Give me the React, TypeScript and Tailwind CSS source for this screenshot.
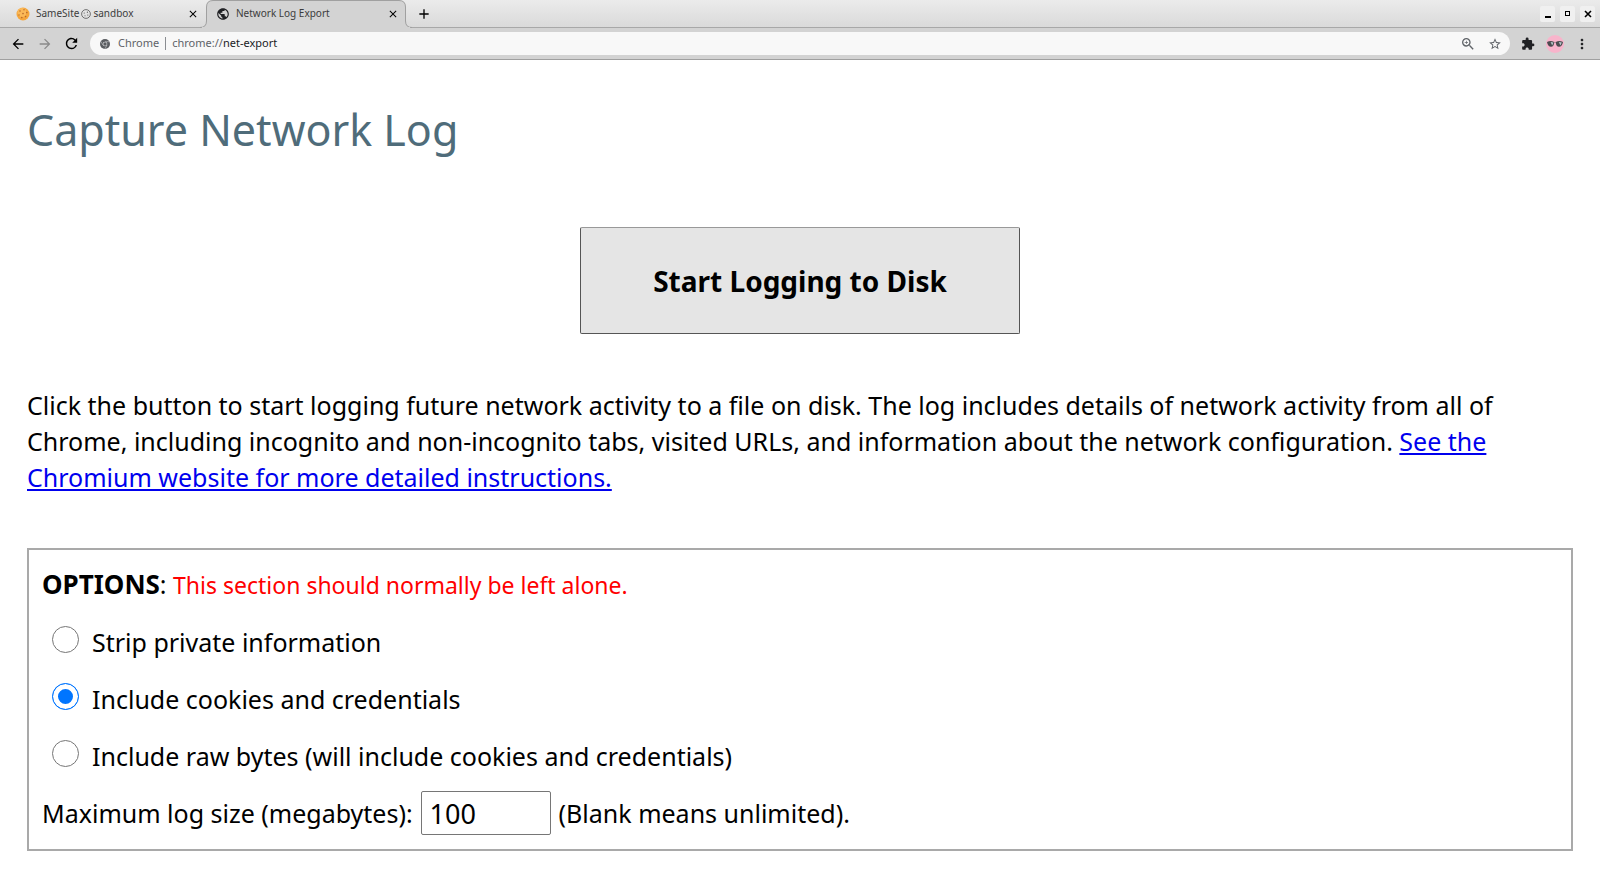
import React, { useState } from 'react';
import {
  MdAdd,
  MdArrowBack,
  MdArrowForward,
  MdClose,
  MdExtension,
  MdMoreVert,
  MdPublic,
  MdRefresh,
  MdStarBorder,
  MdZoomIn,
} from 'react-icons/md';

const captureModes = [
  { id: 'strip', label: 'Strip private information' },
  { id: 'cookies', label: 'Include cookies and credentials' },
  { id: 'raw', label: 'Include raw bytes (will include cookies and credentials)' },
];

const CookieIcon = () => (
  <svg viewBox="0 0 14 14" className="size-[14px] shrink-0">
    <circle cx="7" cy="7" r="6.5" fill="#f5a63c" />
    <circle cx="6" cy="5.5" r="4.5" fill="#fbb958" />
    <g fill="#b8692a">
      <circle cx="4" cy="4" r="0.8" />
      <circle cx="8" cy="2.8" r="0.7" />
      <circle cx="7" cy="6.6" r="0.8" />
      <circle cx="10.8" cy="5.6" r="0.8" />
      <circle cx="3" cy="8" r="0.7" />
      <circle cx="5.8" cy="10.6" r="0.8" />
      <circle cx="9.6" cy="9.6" r="0.8" />
    </g>
  </svg>
);

const CookieOutline = () => (
  <svg viewBox="0 0 10 10" className="size-[10px] shrink-0" fill="none" stroke="#555" strokeWidth="0.8">
    <circle cx="5" cy="5" r="4.4" />
    <g fill="#555" stroke="none">
      <circle cx="3.2" cy="4" r="0.6" />
      <circle cx="6.4" cy="3.2" r="0.6" />
      <circle cx="6.8" cy="6" r="0.6" />
      <circle cx="4" cy="6.8" r="0.5" />
    </g>
  </svg>
);

const ChromeLogo = () => (
  <svg viewBox="0 0 10 10" className="size-[10px] shrink-0">
    <circle cx="5" cy="5" r="5" fill="#5a5d61" />
    <path d="M5 2.7H9.6M3 6.2L0.8 2.3M7 6.2L4.8 10" stroke="#c9cacc" strokeWidth="0.6" />
    <circle cx="5" cy="5" r="2.3" fill="#d8d9da" />
    <circle cx="5" cy="5" r="1.7" fill="#5a5d61" />
  </svg>
);

const Avatar = () => (
  <svg viewBox="0 0 18 18" className="size-[18px]">
    <circle cx="9" cy="9" r="9" fill="#f8b4cb" />
    <path d="M1 7Q4.6 5.2 8.2 7Q8.2 11.6 5 11.8Q1.8 11.6 1 7Z" fill="#4c4c50" />
    <path d="M9.8 7Q13.4 5.2 17 7Q16.2 11.6 13 11.8Q9.8 11.6 9.8 7Z" fill="#4c4c50" />
    <path d="M8 7.4H10" stroke="#8a7078" strokeWidth="0.6" />
    <path d="M4.6 7L7.4 7.4L6.2 10.6ZM12.8 7L15.8 7.4L14.4 10.6Z" fill="#b9c9cc" />
  </svg>
);

const TabStrip = () => (
  <div className="flex h-7 border-b border-[#a8a8a8] bg-linear-to-b from-[#ebebeb] to-[#dadada] text-[10px] text-[#3c3c3c]">
    <div className="flex w-[206px] items-center pl-4 pr-[7px]">
      <CookieIcon />
      <span className="ml-[6px] flex flex-1 items-center gap-[2px] whitespace-nowrap">
        SameSite <CookieOutline /> sandbox
      </span>
      <button aria-label="Close SameSite sandbox" className="text-black">
        <MdClose className="size-3" />
      </button>
    </div>
    <div className="relative flex w-[200px] items-center pl-[10px] pr-[7px]">
      <svg viewBox="0 0 212 28" className="absolute -left-[6px] top-0 h-7 w-[212px]" aria-hidden="true">
        <path
          d="M0 27.5Q6.5 27.5 6.5 21V7Q6.5 0.5 13 0.5H199Q205.5 0.5 205.5 7V21Q205.5 27.5 212 27.5"
          fill="#d3d3d3"
          stroke="#a0a0a0"
        />
        <path d="M2 28H210V27H2Z" fill="#d3d3d3" />
      </svg>
      <MdPublic className="relative size-[14px] text-[#202124]" />
      <span className="relative ml-[6px] flex-1 whitespace-nowrap">Network Log Export</span>
      <button aria-label="Close Network Log Export" className="relative text-black">
        <MdClose className="size-3" />
      </button>
    </div>
    <button aria-label="New tab" className="ml-[10px] text-black">
      <MdAdd className="size-4" />
    </button>
    <div className="ml-auto flex items-center gap-[5px] pr-[5px] text-black">
      <button aria-label="Minimize" className="flex h-4 w-[15px] justify-center rounded-xs bg-[#f0f0f0] pt-[10px]">
        <span className="h-[2px] w-[6px] bg-black" />
      </button>
      <button aria-label="Maximize" className="flex h-4 w-[15px] items-center justify-center rounded-xs bg-[#f0f0f0]">
        <span className="size-[5px] border border-black" />
      </button>
      <button aria-label="Close window" className="flex h-4 w-[15px] items-center justify-center rounded-xs bg-[#f0f0f0]">
        <svg viewBox="0 0 8 8" className="size-2" stroke="currentColor" strokeWidth="1.6">
          <path d="M1 1L7 7M7 1L1 7" />
        </svg>
      </button>
    </div>
  </div>
);

const Toolbar = () => (
  <div className="flex h-8 items-center border-b border-[#a0a0a0] bg-[#d3d3d3] px-[10px] text-[11px]">
    <button aria-label="Back" className="text-black">
      <MdArrowBack className="size-4" />
    </button>
    <button aria-label="Forward" className="ml-[11px] text-[#8a8a8a]">
      <MdArrowForward className="size-4" />
    </button>
    <button aria-label="Reload" className="ml-[10px] text-black">
      <MdRefresh className="size-[17px]" />
    </button>
    <div className="ml-[10px] flex h-[23px] flex-1 items-center rounded-full bg-[#f8f8f8] pl-[10px] pr-2">
      <ChromeLogo />
      <span className="ml-2 text-[#5f6368]">Chrome</span>
      <span className="mx-[6px] h-[13px] w-px bg-[#8a8d91]" />
      <span className="flex-1 text-[#5f6368]">
        chrome://<span className="text-[#202124]">net-export</span>
      </span>
      <button aria-label="Zoom" className="text-[#5f6368]">
        <MdZoomIn className="size-4" />
      </button>
      <button aria-label="Bookmark this page" className="ml-3 text-[#5f6368]">
        <MdStarBorder className="size-[14px]" />
      </button>
    </div>
    <button aria-label="Extensions" className="ml-[11px] text-[#202124]">
      <MdExtension className="size-[14px]" />
    </button>
    <button aria-label="Profile" className="ml-[11px]">
      <Avatar />
    </button>
    <button aria-label="Menu" className="ml-[10px] text-[#202124]">
      <MdMoreVert className="size-4" />
    </button>
  </div>
);

const App: React.FC = () => {
  const [mode, setMode] = useState('cookies');
  const [maxSize, setMaxSize] = useState('100');

  return (
    <div className="min-h-screen bg-white font-['Noto_Sans',sans-serif] text-black">
      <header>
        <TabStrip />
        <Toolbar />
      </header>

      <main className="px-[27px] pt-10 pb-7 text-[25px] leading-9">
        <h1 className="text-[43px] leading-[60px] text-[#4f6c7a]">Capture Network Log</h1>

        <div className="mt-[67px] flex justify-center">
          <button className="rounded-xs border border-[#555] border-t-[#999] bg-[#e5e5e5] px-[72px] pt-[34px] pb-[33px] text-[28px] leading-[38px] font-bold">
            Start Logging to Disk
          </button>
        </div>

        <p className="mt-[53px]">
          Click the button to start logging future network activity to a file on disk. The log includes details of
          network activity from all of Chrome, including incognito and non-incognito tabs, visited URLs, and
          information about the network configuration.{' '}
          <a href="#instructions" className="text-[#0000ee] underline">
            See the Chromium website for more detailed instructions.
          </a>
        </p>

        <section className="mt-[53px] border-2 border-[#a9a9a9] px-[13px] pt-4 pb-[14px]">
          <p>
            <b className="text-[26px]">OPTIONS</b>:{' '}
            <span className="text-[23px] text-[#ff0000]">This section should normally be left alone.</span>
          </p>
          <div className="mt-[21px] flex flex-col gap-[21px] pl-[10px]">
            {captureModes.map((item) => (
              <label key={item.id} className="flex">
                <input
                  type="radio"
                  name="capture-mode"
                  checked={mode === item.id}
                  onChange={() => setMode(item.id)}
                  className="mt-[2px] mr-[13px] size-[27px] appearance-none rounded-full border border-[#767676] bg-white checked:border-[#0075ff] checked:bg-[#0075ff] checked:shadow-[inset_0_0_0_5px_white]"
                />
                {item.label}
              </label>
            ))}
          </div>
          <div className="mt-[17px] flex items-center gap-2">
            <label htmlFor="max-size">Maximum log size (megabytes):</label>
            <input
              id="max-size"
              type="text"
              value={maxSize}
              onChange={(e) => setMaxSize(e.target.value)}
              className="h-11 w-[130px] rounded-xs border border-[#767676] bg-white px-2 text-[27px]"
            />
            <span>(Blank means unlimited).</span>
          </div>
        </section>
      </main>
    </div>
  );
};

export default App;
